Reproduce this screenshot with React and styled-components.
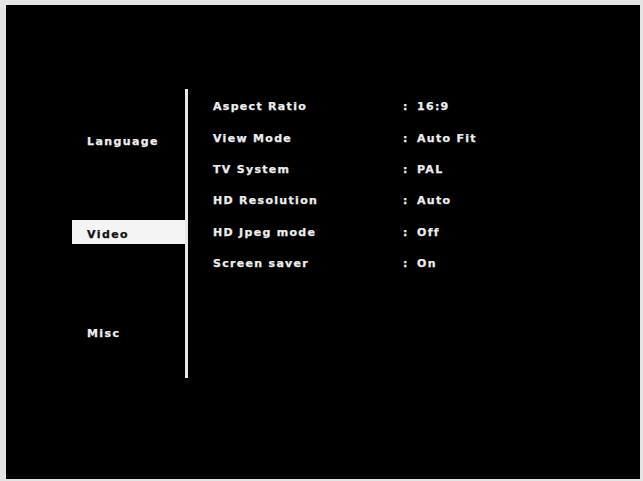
import React from 'react';
import styled, { createGlobalStyle } from 'styled-components';

const GlobalStyle = createGlobalStyle`
  html, body {
    margin: 0;
    padding: 0;
    background: #e4e4e4;
  }
  body {
    font-family: "DejaVu Sans", "Liberation Sans", sans-serif;
  }
`;

const menuItems = [
  { label: 'Language', active: false, space: 38 },
  { label: 'Video', active: true, space: 69 },
  { label: 'Misc', active: false, space: 75 },
];

const settings = [
  { name: 'Aspect Ratio', value: '16:9' },
  { name: 'View Mode', value: 'Auto Fit' },
  { name: 'TV System', value: 'PAL' },
  { name: 'HD Resolution', value: 'Auto' },
  { name: 'HD Jpeg mode', value: 'Off' },
  { name: 'Screen saver', value: 'On' },
];

const App = () => {
  return (
    <>
      <GlobalStyle />
      <Screen>
        <Body>
          <Menu>
            {menuItems.map((item) => (
              <MenuItem key={item.label} $active={item.active} $space={item.space}>
                {item.label}
              </MenuItem>
            ))}
          </Menu>
          <Divider />
          <Settings>
            {settings.map((s) => (
              <Row key={s.name}>
                <Name>{s.name}</Name>
                <Colon>:</Colon>
                <Value>{s.value}</Value>
              </Row>
            ))}
          </Settings>
        </Body>
      </Screen>
    </>
  );
};

const Screen = styled.div`
  margin: 5px 0 0 6px;
  width: 634px;
  height: 474px;
  background: #000;
  overflow: hidden;
`;

const Body = styled.div`
  display: flex;
  align-items: flex-start;
  padding: 84px 0 0 66px;
`;

const Menu = styled.div`
  width: 113px;
  display: flex;
  flex-direction: column;
`;

const MenuItem = styled.div`
  margin-top: ${(p) => p.$space}px;
  height: 21px;
  padding: 3px 0 0 15px;
  line-height: 24px;
  font-size: 11px;
  font-weight: bold;
  letter-spacing: 1.4px;
  -webkit-text-stroke: 0.25px currentColor;
  color: ${(p) => (p.$active ? '#111' : '#eee')};
  background: ${(p) => (p.$active ? '#f4f4f4' : 'transparent')};
`;

const Divider = styled.div`
  width: 3px;
  height: 289px;
  background: #e8e8e8;
`;

const Settings = styled.div`
  padding: 2px 0 0 25px;
  display: flex;
  flex-direction: column;
`;

const Row = styled.div`
  display: flex;
  height: 31.4px;
  align-items: center;
  font-size: 11px;
  font-weight: bold;
  letter-spacing: 1.3px;
  -webkit-text-stroke: 0.25px currentColor;
  color: #eee;
`;

const Name = styled.span`
  width: 190px;
`;

const Colon = styled.span`
  width: 14px;
`;

const Value = styled.span``;

export default App;
